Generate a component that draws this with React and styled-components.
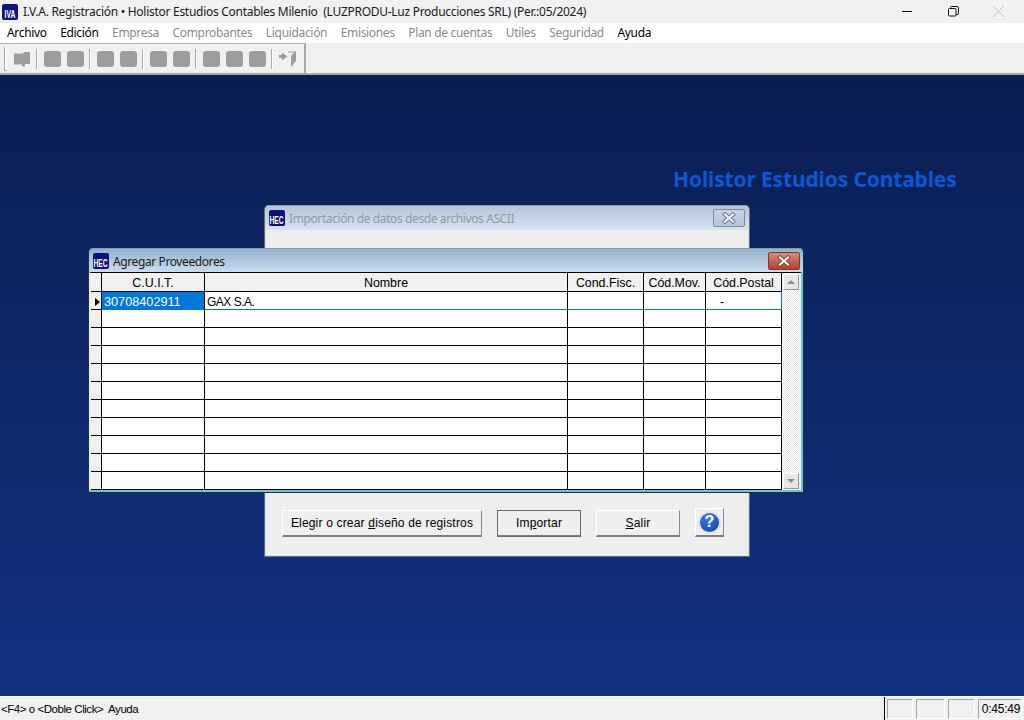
import React from "react";
import styled, { createGlobalStyle } from "styled-components";

const GlobalStyle = createGlobalStyle`
html, body { margin: 0; padding: 0; background: #f0f0f0; }
* { box-sizing: border-box; }
`

const Screen = styled.div`
width: 1024px;
height: 720px;
display: flex;
flex-direction: column;
overflow: hidden;
font-family: 'Noto Sans', sans-serif;
color: #000;
`

const TitleBar = styled.div`
height: 23px;
display: flex;
align-items: center;
padding-left: 2px;
background: #f1f1f1;
font-size: 12px;
`
const AppLogo = styled.div`
width: 16px;
height: 16px;
background: #14147e;
color: #fff;
display: flex;
align-items: flex-end;
justify-content: center;
overflow: hidden;
border-radius: 2px;
margin-right: 5px;
`
const LogoText = styled.span`
font: bold 10px/11px 'Liberation Sans', sans-serif;
transform: scaleX(0.68) scaleY(1.05);
white-space: nowrap;
`
const TitleText = styled.span`
flex: 1;
white-space: pre;
color: #1a1a1a;
letter-spacing: -0.28px;
`
const WinButtons = styled.div`
display: flex;
width: 139px;
height: 100%;
align-items: center;
`
const WinButton = styled.div`
width: 45.5px;
display: flex;
justify-content: center;
`

const MenuBar = styled.div`
height: 19px;
display: flex;
align-items: center;
padding-left: 7px;
gap: 13.5px;
background: #fff;
font-size: 12px;
letter-spacing: -0.33px;
`
const MenuItem = styled.span`
color: ${p => p.$off ? "#8a8a8a" : "#000"};
`

const ToolBar = styled.div`
height: 33px;
display: flex;
background: #f0f0f0;
border-top: 1px solid #fff;
border-bottom: 2px solid #a9a9a9;
`
const ToolGroup = styled.div`
width: 306px;
display: flex;
align-items: center;
padding-left: 4px;
border-top: 1px solid #b5b5b5;
border-right: 2px solid #a9a9a9;
`
const Grip = styled.div`
width: 3px;
height: 24px;
border-left: 1px solid #a9a9a9;
border-bottom: 1px solid #a9a9a9;
background: #fff;
margin-right: 7px;
`
const ToolSquare = styled.div`
width: 17px;
height: 16px;
border-radius: 3px;
background: #9d9d9d;
margin-right: ${p => p.$last ? "5px" : "6px"};
`
const ToolSep = styled.div`
width: 2px;
height: 20px;
background: linear-gradient(to right, #a9a9a9 50%, #fff 50%);
margin-right: 6px;
`
const ToolIcon = styled.svg`
width: 17px;
height: 16px;
margin-right: 5px;
`

const Desktop = styled.div`
flex: 1;
position: relative;
background: linear-gradient(to bottom, #0a1e50, #143283);
`
const Brand = styled.div`
position: absolute;
left: 673px;
top: 90px;
font-size: 21px;
font-weight: 700;
line-height: 28px;
letter-spacing: -0.15px;
color: #0a58d4;
white-space: nowrap;
`

const Win = styled.div`
position: absolute;
display: flex;
flex-direction: column;
`
const BackWin = styled(Win)`
left: 264px;
top: 130px;
width: 486px;
height: 352px;
background: #eeeeee;
border: 1px solid #5f6b78;
border-top-color: #8c98a5;
border-radius: 5px 5px 0 0;
box-shadow: inset 0 0 0 1px #d5e3f0;
`
const BackTitle = styled.div`
height: 24px;
display: flex;
align-items: center;
padding: 0 4px;
background: linear-gradient(to bottom, #b4c5d8, #d6e4f2);
border-radius: 4px 4px 0 0;
font-size: 12px;
color: #8f9aa5;
`
const TitleLabel = styled.span`
flex: 1;
margin-left: 4px;
letter-spacing: -0.4px;
`
const FrontLabel = styled(TitleLabel)`
padding-top: 2px;
`
const CloseBtn = styled.div`
width: ${p => p.$w}px;
height: 18px;
display: flex;
align-items: center;
justify-content: center;
border-radius: 2px;
border: 1px solid ${p => p.$active ? "#7a3a30" : "#7b8b9f"};
background: ${p => p.$active ? "linear-gradient(to bottom, #d98a78, #b8402e)" : "linear-gradient(to bottom, #c4d3e3, #b3c5d9)"};
margin-right: ${p => p.$mr}px;
`
const HecLogo = styled.div`
width: 16px;
height: 16px;
border-radius: 2px;
background: #10107a;
color: #fff;
display: flex;
align-items: flex-end;
justify-content: center;
overflow: hidden;
`
const BackBody = styled.div`
flex: 1;
display: flex;
align-items: flex-end;
padding: 0 0 19px 17px;
`
const Button = styled.div`
height: 27px;
width: ${p => p.$w}px;
margin-right: ${p => p.$mr}px;
display: flex;
align-items: center;
justify-content: center;
white-space: pre;
background: #eeeeee;
font: 12px 'Liberation Sans', sans-serif;
letter-spacing: 0.18px;
border-top: 1px solid #fff;
border-left: 1px solid #fff;
border-right: 1px solid #8a8a8a;
border-bottom: 2px solid #7d7d7d;
outline: ${p => p.$def ? "1px solid #6a6a6a" : "none"};
outline-offset: -1px;
`
const HelpButton = styled(Button)`
height: 29px;
width: 29px;
`
const HelpDot = styled.div`
width: 23px;
height: 23px;
border-radius: 50%;
background: radial-gradient(circle at 40% 30%, #3f78d8, #143fa5);
border: 2px solid #dfe8f8;
color: #fff;
font: bold 16px 'Liberation Sans', sans-serif;
display: flex;
align-items: center;
justify-content: center;
`

const FrontWin = styled(Win)`
left: 88px;
top: 173px;
width: 716px;
height: 245px;
padding: 0 2px 2px 0;
border: 1px solid #23303c;
border-top-color: #8c98a5;
border-radius: 5px 5px 0 0;
background: #6fc3de;
`
const FrontTitle = styled.div`
height: 24px;
margin: 0 -2px 0 0;
padding: 0 0 0 4px;
display: flex;
align-items: center;
background: linear-gradient(to bottom, #94b1cd, #c9dcef);
border-radius: 4px 4px 0 0;
font-size: 12px;
color: #1c1c1c;
`
const Grid = styled.div`
flex: 1;
display: flex;
background: #fff;
border-top: 1px solid #000;
border-left: 2px solid #e4edf4;
`
const Rows = styled.div`
width: 691px;
display: flex;
flex-direction: column;
`
const Row = styled.div`
height: ${p => p.$head ? 19 : 18}px;
display: flex;
`
const Cell = styled.div`
width: ${p => p.$w}px;
display: flex;
align-items: center;
justify-content: ${p => p.$center ? "center" : "flex-start"};
padding-left: ${p => p.$center ? 0 : p.$pad ?? 2}px;
padding-top: 2px;
white-space: nowrap;
font: ${p => p.$size ?? 12}px 'Liberation Sans', sans-serif;
letter-spacing: ${p => p.$track ?? 0}px;
color: ${p => p.$sel ? "#fff" : "#000"};
background: ${p => p.$sel ? "#0078d7" : p.$head ? "#f0f0f0" : "#fff"};
border-right: 1px solid ${p => p.$end ? "#0078d7" : "#000"};
border-bottom: 1px solid ${p => p.$cur ? "#0078d7" : "#000"};
`
const Scroll = styled.div`
flex: 1;
display: flex;
flex-direction: column;
justify-content: space-between;
padding: 1px 0 1px 1px;
background: repeating-conic-gradient(#e4e4e4 0% 25%, #ffffff 0% 50%) 0 0 / 2px 2px;
`
const ScrollBtn = styled.div`
width: 16px;
height: 16px;
display: flex;
align-items: center;
justify-content: center;
background: #e6e6e6;
border-top: 1px solid #fff;
border-left: 1px solid #fff;
border-right: 1px solid #9a9a9a;
border-bottom: 1px solid #9a9a9a;
`
const Arrow = styled.div`
width: 0;
height: 0;
border-left: 4px solid transparent;
border-right: 4px solid transparent;
${p => p.$down ? "border-top: 4px solid #8f8f8f;" : "border-bottom: 4px solid #8f8f8f;"}
`
const Marker = styled.div`
width: 0;
height: 0;
margin-left: 4px;
border-top: 4px solid transparent;
border-bottom: 4px solid transparent;
border-left: 5px solid #000;
`

const StatusBar = styled.div`
height: 24px;
display: flex;
align-items: center;
background: #f0f0f0;
border-top: 1px solid #fff;
font: 11.5px 'Liberation Sans', sans-serif;
letter-spacing: -0.45px;
`
const StatusText = styled.div`
width: 885px;
height: 100%;
padding-left: 1px;
display: flex;
align-items: center;
white-space: pre;
border-right: 1px solid #000;
`
const Panels = styled.div`
display: flex;
gap: 3px;
padding-left: 2px;
`
const Panel = styled.div`
width: ${p => p.$w}px;
height: 20px;
display: flex;
align-items: center;
justify-content: center;
padding-left: 2px;
font-size: 12px;
letter-spacing: -0.2px;
border-top: 1px solid #a5a5a5;
border-left: 1px solid #a5a5a5;
border-right: 1px solid #fff;
border-bottom: 1px solid #fff;
`

const menus = [
  ["Archivo", false], ["Edición", false], ["Empresa", true], ["Comprobantes", true],
  ["Liquidación", true], ["Emisiones", true], ["Plan de cuentas", true], ["Utiles", true],
  ["Seguridad", true], ["Ayuda", false],
]
const cols = [
  ["C.U.I.T.", 103],
  ["Nombre", 363],
  ["Cond.Fisc.", 76],
  ["Cód.Mov.", 62],
  ["Cód.Postal", 76],
]
const toolGroups = [2, 2, 2, 3]

function CloseX({ color, edge }) {
  return (
    <svg width="14" height="12" viewBox="0 0 14 12">
      <path d="M3 2.5 L11 9.5 M11 2.5 L3 9.5" stroke={edge} strokeWidth="4" strokeLinecap="square" />
      <path d="M3 2.5 L11 9.5 M11 2.5 L3 9.5" stroke={color} strokeWidth="2.2" strokeLinecap="square" />
    </svg>
  )
}

function Tools() {
  return (
    <ToolGroup>
      <Grip />
      <ToolIcon viewBox="0 0 17 16">
        <path d="M0 2.5H9L10 1H16V13H11V15.5H8V13.5H0Z" fill="#9d9d9d" />
      </ToolIcon>
      {toolGroups.map((n, g) => (
        <React.Fragment key={g}>
          <ToolSep />
          {Array.from({ length: n }).map((_, i) => <ToolSquare key={i} $last={i === n - 1} />)}
        </React.Fragment>
      ))}
      <ToolSep />
      <ToolIcon viewBox="0 0 17 16">
        <path d="M0 4H3V1.5L8.5 5.5L3 9.5V7H0Z M9 0.5H17V10L12 16V5L15 1.5H9Z" fill="#9d9d9d" />
      </ToolIcon>
    </ToolGroup>
  )
}

function ProveedoresGrid() {
  return (
    <Grid>
      <Rows>
        <Row $head>
          <Cell $w={11} $head />
          {cols.map(([name, w]) => <Cell key={name} $w={w} $head $center $size={12.4}>{name}</Cell>)}
        </Row>
        <Row>
          <Cell $w={11} $head $pad={0}><Marker /></Cell>
          <Cell $w={103} $sel $cur $size={12.7}>30708402911</Cell>
          <Cell $w={363} $cur $track={-0.5}>GAX S.A.</Cell>
          <Cell $w={76} $cur />
          <Cell $w={62} $cur />
          <Cell $w={76} $cur $end $pad={14}>-</Cell>
        </Row>
        {Array.from({ length: 10 }).map((_, r) => (
          <Row key={r}>
            <Cell $w={11} $head />
            {cols.map(([name, w]) => <Cell key={name} $w={w} />)}
          </Row>
        ))}
      </Rows>
      <Scroll>
        <ScrollBtn><Arrow /></ScrollBtn>
        <ScrollBtn><Arrow $down /></ScrollBtn>
      </Scroll>
    </Grid>
  )
}

export default function App() {
  return (
    <Screen>
      <GlobalStyle />
      <TitleBar>
        <AppLogo><LogoText>IVA</LogoText></AppLogo>
        <TitleText>I.V.A. Registración • Holistor Estudios Contables Milenio  (LUZPRODU-Luz Producciones SRL) (Per.:05/2024)</TitleText>
        <WinButtons>
          <WinButton>
            <svg width="11" height="11" viewBox="0 0 11 11"><path d="M0 5.5H10" stroke="#111" /></svg>
          </WinButton>
          <WinButton>
            <svg width="11" height="11" viewBox="0 0 11 11" fill="none" stroke="#111">
              <rect x="0.5" y="2.5" width="7.5" height="7.5" rx="1" />
              <path d="M2.5 2.5V1.5Q2.5 0.5 3.5 0.5H9Q10.5 0.5 10.5 2V7.5Q10.5 8.5 9 8.5H8" />
            </svg>
          </WinButton>
          <WinButton>
            <svg width="11" height="11" viewBox="0 0 11 11"><path d="M0 0L11 11M11 0L0 11" stroke="#c4c4c4" /></svg>
          </WinButton>
        </WinButtons>
      </TitleBar>
      <MenuBar>
        {menus.map(([name, off]) => <MenuItem key={name} $off={off}>{name}</MenuItem>)}
      </MenuBar>
      <ToolBar>
        <Tools />
      </ToolBar>
      <Desktop>
        <Brand>Holistor Estudios Contables</Brand>
        <BackWin>
          <BackTitle>
            <HecLogo><LogoText>HEC</LogoText></HecLogo>
            <TitleLabel>Importación de datos desde archivos ASCII</TitleLabel>
            <CloseBtn $w={32} $mr={0}><CloseX color="#f4f7fa" edge="#6d7680" /></CloseBtn>
          </BackTitle>
          <BackBody>
            <Button $w={200} $mr={15}>Elegir o crear <u>d</u>iseño de registros</Button>
            <Button $w={84} $mr={15} $def>Im<u>p</u>ortar</Button>
            <Button $w={84} $mr={15}><u>S</u>alir</Button>
            <HelpButton $mr={0}><HelpDot>?</HelpDot></HelpButton>
          </BackBody>
        </BackWin>
        <FrontWin>
          <FrontTitle>
            <HecLogo><LogoText>HEC</LogoText></HecLogo>
            <FrontLabel>Agregar Proveedores</FrontLabel>
            <CloseBtn $w={32} $mr={3} $active><CloseX color="#fff" edge="#8a3a2c" /></CloseBtn>
          </FrontTitle>
          <ProveedoresGrid />
        </FrontWin>
      </Desktop>
      <StatusBar>
        <StatusText>{"<F4> o <Doble Click>  Ayuda"}</StatusText>
        <Panels>
          <Panel $w={26} />
          <Panel $w={29} />
          <Panel $w={27} />
          <Panel $w={44}>0:45:49</Panel>
        </Panels>
      </StatusBar>
    </Screen>
  )
}
